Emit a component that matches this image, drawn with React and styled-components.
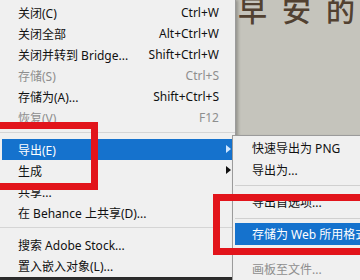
import styled, { createGlobalStyle } from 'styled-components';

const GlobalStyle = createGlobalStyle`
  html, body {
    margin: 0;
    padding: 0;
    width: 360px;
    height: 280px;
    overflow: hidden;
    background: #c5c4bc;
  }
  * { box-sizing: border-box; }
`;

const mainItems = [
  { label: '关闭(C)', shortcut: 'Ctrl+W' },
  { label: '关闭全部', shortcut: 'Alt+Ctrl+W' },
  { label: '关闭并转到 Bridge...', shortcut: 'Shift+Ctrl+W' },
  { label: '存储(S)', shortcut: 'Ctrl+S', disabled: true },
  { label: '存储为(A)...', shortcut: 'Shift+Ctrl+S' },
  { label: '恢复(V)', shortcut: 'F12', disabled: true },
  { sep: true },
  { label: '导出(E)', arrow: true, active: true },
  { label: '生成', arrow: true },
  { label: '共享...' },
  { label: '在 Behance 上共享(D)...' },
  { sep: true },
  { label: '搜索 Adobe Stock...' },
  { label: '置入嵌入对象(L)...' },
];

const subItems = [
  { label: '快速导出为 PNG' },
  { label: '导出为...' },
  { sep: true },
  { label: '导出首选项...' },
  { sep: true, gap: 'small' },
  { label: '存储为 Web 所用格式(旧版)...', active: true },
  { sep: true, gap: 'wide' },
  { label: '画板至文件...', disabled: true },
];

const App = () => {
  return (
    <>
      <GlobalStyle />
      <Page>
        <Document>
          <Heading>早安的</Heading>
        </Document>
        <Taskbar />

        <Menu>
          {mainItems.map((item, i) =>
            item.sep ? (
              <Separator key={i} />
            ) : (
              <Item key={i} $active={item.active} $disabled={item.disabled}>
                <span>{item.label}</span>
                {item.shortcut && <span>{item.shortcut}</span>}
                {item.arrow && <Arrow $active={item.active} />}
              </Item>
            )
          )}
        </Menu>

        <SubMenu>
          {subItems.map((item, i) =>
            item.sep ? (
              <SubSeparator key={i} $gap={item.gap} />
            ) : (
              <SubItem key={i} $active={item.active} $disabled={item.disabled}>
                {item.label}
              </SubItem>
            )
          )}
        </SubMenu>

        {/* red annotation frames drawn over the screenshot */}
        <Marker $left={-10} $top={122} $width={108} $height={68} />
        <Marker $left={213} $top={194} $width={160} $height={61} />
      </Page>
    </>
  );
};

const Page = styled.div`
  position: relative;
  width: 360px;
  height: 280px;
  overflow: hidden;
  font-family: 'Noto Sans', 'Noto Sans CJK SC', sans-serif;
  font-size: 12px;
  display: flex;
  flex-direction: column;
`;

const Document = styled.div`
  flex: 1;
  background: #c5c4bc;
  padding-left: 238px;
`;

const Heading = styled.div`
  margin-top: -6px;
  font-family: 'Noto Sans CJK SC', sans-serif;
  font-size: 29px;
  font-weight: 500;
  line-height: 30px;
  letter-spacing: 15px;
  color: #524131;
  white-space: nowrap;
`;

const Taskbar = styled.div`
  height: 3px;
  background: #2e2e2e;
`;

const Menu = styled.div`
  position: absolute;
  left: 0;
  top: 0;
  width: 236px;
  height: 277px;
  padding-top: 2px;
  background: #f0f0f0;
  border-right: 1px solid #9b9b9b;
  box-shadow: 2px 0 3px rgba(0, 0, 0, 0.25);
`;

const Item = styled.div`
  position: relative;
  height: 21px;
  margin-left: 2px;
  padding: 0 16px;
  display: flex;
  align-items: center;
  justify-content: space-between;
  white-space: nowrap;
  color: ${({ $active, $disabled }) =>
    $active ? '#ffffff' : $disabled ? '#8e8e8e' : '#111111'};
  background: ${({ $active }) => ($active ? '#1572cd' : 'transparent')};
`;

const Arrow = styled.span`
  position: absolute;
  right: 4px;
  top: 6px;
  width: 0;
  height: 0;
  border-top: 4.5px solid transparent;
  border-bottom: 4.5px solid transparent;
  border-left: 5px solid ${({ $active }) => ($active ? '#cfe6ff' : '#111')};
`;

const Separator = styled.div`
  height: 1px;
  margin: 4px 0 6px 0;
  background: #d5d5d5;
`;

const SubMenu = styled.div`
  position: absolute;
  left: 232px;
  top: 135px;
  width: 150px;
  height: 150px;
  padding-top: 1px;
  background: #f0f0f0;
  border: 1px solid #9b9b9b;
  box-shadow: 2px 2px 3px rgba(0, 0, 0, 0.25);
`;

const SubItem = styled.div`
  height: 22px;
  margin-left: 2px;
  padding-left: 17px;
  display: flex;
  align-items: center;
  white-space: nowrap;
  color: ${({ $active, $disabled }) =>
    $active ? '#ffffff' : $disabled ? '#8e8e8e' : '#111111'};
  background: ${({ $active }) => ($active ? '#1572cd' : 'transparent')};
`;

const SubSeparator = styled.div`
  height: 1px;
  margin: ${({ $gap }) =>
    $gap === 'small' ? '5px 0 4px 2px' : $gap === 'wide' ? '6px 0 6px 2px' : '4px 0 5px 2px'};
  background: #d0d0d0;
`;

const Marker = styled.div`
  position: absolute;
  left: ${({ $left }) => $left}px;
  top: ${({ $top }) => $top}px;
  width: ${({ $width }) => $width}px;
  height: ${({ $height }) => $height}px;
  border: 7px solid #e2141b;
`;

export default App;
